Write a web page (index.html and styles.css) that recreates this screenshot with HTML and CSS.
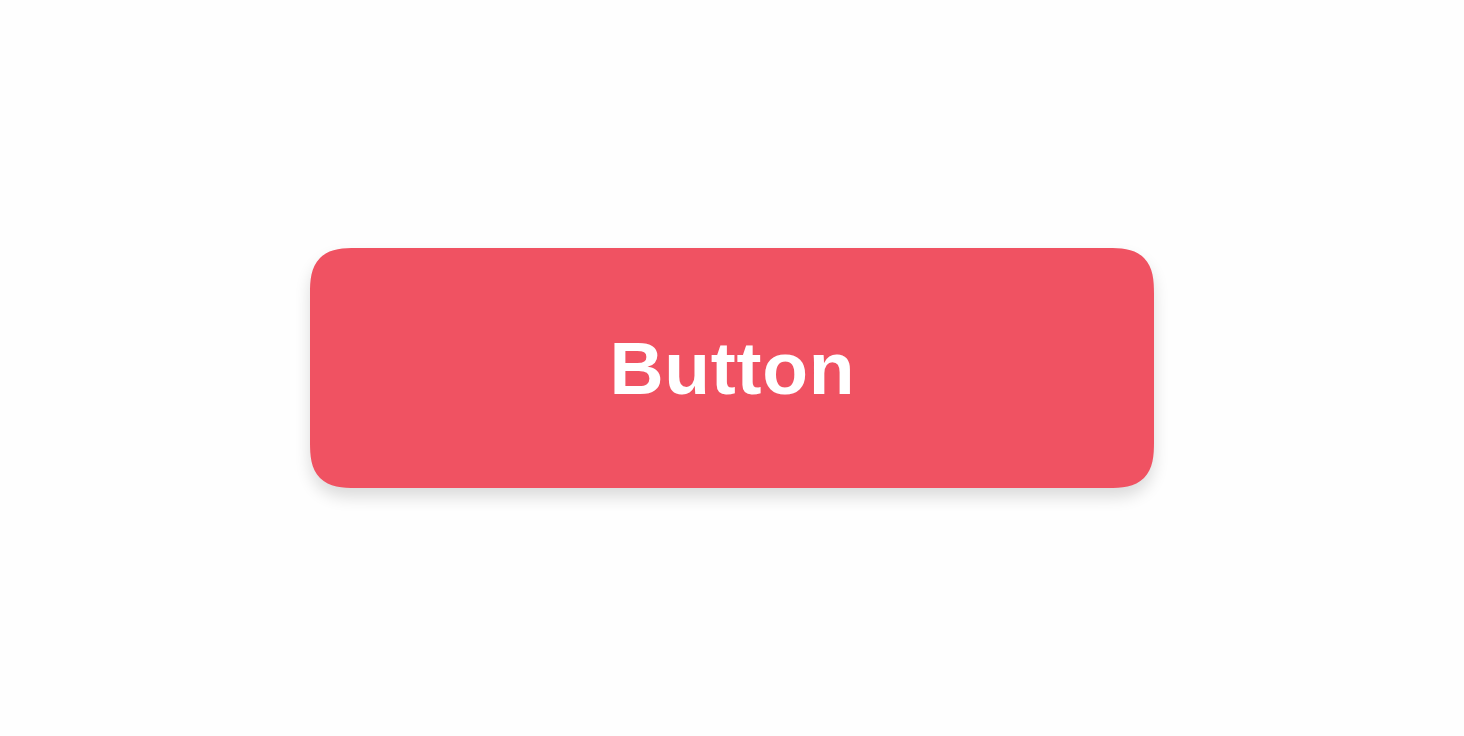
FILE: index.html
```html
<!DOCTYPE html>
<html lang="en">
<head>
<meta charset="utf-8">
<title>Button</title>
<link rel="stylesheet" href="styles.css">
</head>
<body>
<main class="stage">
  <button class="btn" type="button">Button</button>
</main>
</body>
</html>
```
FILE: styles.css
```css
html, body {
  margin: 0;
  height: 100%;
  background: #fefefe;
}

.stage {
  height: 100%;
  display: flex;
  align-items: center;
  justify-content: center;
}

.btn {
  width: 844px;
  height: 240px;
  border: none;
  border-radius: 40px;
  background: #f05262;
  color: #ffffff;
  font-family: "Liberation Sans", Arial, sans-serif;
  font-weight: 700;
  font-size: 75px;
  letter-spacing: 0.7px;
  text-indent: 0.7px;
  line-height: 1;
  padding: 0;
  box-shadow: 0 9px 16px rgba(0, 0, 0, 0.14);
  cursor: pointer;
}

/* smoother, continuous corners where the browser can draw them */
@supports (corner-shape: superellipse(1.5)) {
  .btn {
    border-radius: 46px;
    corner-shape: superellipse(1.5);
  }
}
```
